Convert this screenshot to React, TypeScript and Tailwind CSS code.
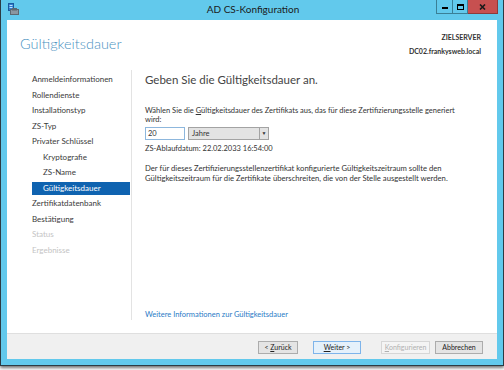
const NAV = [
  { label: 'Anmeldeinformationen' },
  { label: 'Rollendienste' },
  { label: 'Installationstyp' },
  { label: 'ZS-Typ' },
  { label: 'Privater Schlüssel' },
  { label: 'Kryptografie', sub: true },
  { label: 'ZS-Name', sub: true },
  { label: 'Gültigkeitsdauer', sub: true, active: true },
  { label: 'Zertifikatdatenbank' },
  { label: 'Bestätigung' },
  { label: 'Status', disabled: true },
  { label: 'Ergebnisse', disabled: true },
]

function AppIcon() {
  return (
    <svg width="11" height="12" viewBox="0 0 11 12">
      <rect x="0.5" y="0.5" width="5" height="7" fill="#2f7fd0" stroke="#1b5a9e" />
      <rect x="1.5" y="2" width="3" height="1" fill="#bfe0ff" />
      <rect x="1.5" y="4" width="3" height="1" fill="#bfe0ff" />
      <rect x="2.5" y="6.5" width="8" height="5" fill="#8a96a0" stroke="#5d6870" />
      <rect x="4.5" y="5.5" width="4" height="1.5" fill="none" stroke="#5d6870" />
    </svg>
  )
}

function CaptionButtons() {
  return (
    <div className="flex h-[14px]">
      <div className="w-[17px] h-full border border-t-0 border-[#3a7f96] flex items-end justify-center pb-[4px]">
        <div className="w-[6px] h-[2px] bg-black" />
      </div>
      <div className="w-[15px] h-full border border-t-0 border-l-0 border-[#3a7f96] flex items-center justify-center">
        <div className="w-[7px] h-[6px] border-[1.5px] border-t-2 border-black" />
      </div>
      <div className="w-[30px] h-full bg-[#c75050] border border-t-0 border-l-0 border-[#8e3a3a] flex items-center justify-center">
        <svg width="7" height="6" viewBox="0 0 7 6">
          <path d="M1 0.5 L6 5.5 M6 0.5 L1 5.5" stroke="#1a1a1a" strokeWidth="1.6" />
        </svg>
      </div>
    </div>
  )
}

function Btn({ children, focus, disabled }: { children: React.ReactNode; focus?: boolean; disabled?: boolean }) {
  return (
    <div
      className={
        'h-[13px] flex items-center justify-center text-[7px] leading-none border ' +
        (focus
          ? 'border-[#7eb4ea] bg-[#e5f1fb] text-[#222]'
          : disabled
            ? 'border-[#d6d6d6] bg-[#f4f4f4] text-[#b0b0b0]'
            : 'border-[#acacac] bg-[#e4e4e4] text-[#222]')
      }
    >
      <span className="whitespace-pre">{children}</span>
    </div>
  )
}

export default function App() {
  return (
    <div className="w-[504px] h-[370px] bg-white overflow-hidden font-['Segoe_UI','Lato',sans-serif] text-[#333]">
      <div className="w-[504px] h-[366px] bg-[#62c9ec] border border-t-0 border-[#2c3b43] flex flex-col shadow-[0_2px_3px_rgba(0,0,0,0.55)]">
        {/* title bar */}
        <div className="h-[20px] grid grid-cols-[1fr_auto_1fr] pl-[7px] pr-[5px]">
          <div className="pt-[3px]">
            <AppIcon />
          </div>
          <div className="text-[10px] leading-[20px] text-[#1b1b1b] -mt-[1px]">AD CS-Konfiguration</div>
          <div className="flex justify-end">
            <CaptionButtons />
          </div>
        </div>

        {/* client */}
        <div className="mx-[6px] mb-[6px] flex-1 bg-white flex flex-col">
          <div className="h-[50px] flex justify-between pl-[13px] pr-[16px]">
            <div className="pt-[14px] text-[14.5px] leading-[20px] font-light text-[#4a92bf]">Gültigkeitsdauer</div>
            <div className="pt-[10px] text-right text-[7px] font-bold text-[#333] leading-[14px]">
              <div>ZIELSERVER</div>
              <div>DC02.frankysweb.local</div>
            </div>
          </div>

          <div className="h-[250px] flex">
            <div className="w-[125px] border-r border-[#e3e3e3] pl-[25px] pr-[1px] pt-[2px] text-[8px]">
              {NAV.map((n) => (
                <div key={n.label} className="h-[15.5px] flex items-center">
                  <div
                    className={
                      'w-full h-[13px] leading-[13px] whitespace-nowrap ' +
                      (n.sub ? 'pl-[11px] ' : '') +
                      (n.active ? 'bg-[#0f63b0] text-white' : n.disabled ? 'text-[#c4c4c4]' : 'text-[#3a3a3a]')
                    }
                  >
                    {n.label}
                  </div>
                </div>
              ))}
            </div>

            <div className="flex-1 pl-[13px] flex flex-col text-[7.5px] text-[#333]">
              <div className="mt-[3px] text-[11.5px] leading-[14px] text-[#444]">Geben Sie die Gültigkeitsdauer an.</div>
              <div className="mt-[19px] leading-[9px] whitespace-nowrap">
                Wählen Sie die <span className="underline">G</span>ültigkeitsdauer des Zertifikats aus, das für diese
                Zertifizierungsstelle generiert
                <br />
                wird:
              </div>
              <div className="mt-[3px] flex gap-[3px]">
                <div className="w-[40px] h-[13px] border border-[#8db7dd] bg-white pl-[2px] leading-[11px]">20</div>
                <div className="w-[81px] h-[13px] border border-[#a3a3a3] bg-[#e3e3e3] flex">
                  <div className="flex-1 pl-[3px] leading-[11px]">Jahre</div>
                  <div className="w-[9px] border-l border-[#a3a3a3] flex items-center justify-center text-[5px] text-[#333]">
                    ▼
                  </div>
                </div>
              </div>
              <div className="mt-[4px] leading-[10px]">ZS-Ablaufdatum: 22.02.2033 16:54:00</div>
              <div className="mt-[9px] leading-[10px] whitespace-nowrap text-[7.7px]">
                Der für dieses Zertifizierungsstellenzertifikat konfigurierte Gültigkeitszeitraum sollte den
                <br />
                Gültigkeitszeitraum für die Zertifikate überschreiten, die von der Stelle ausgestellt werden.
              </div>
              <div className="mt-auto leading-[10px] text-[#2a7bc6]">Weitere Informationen zur Gültigkeitsdauer</div>
            </div>
          </div>

          <div className="h-[13px]" />

          <div className="flex-1 bg-[#f0f0f0] border-t border-[#dfdfdf] flex justify-end items-start pt-[7px] pr-[14px]">
            <div className="w-[40px]">
              <Btn>
                {'< '}
                <span className="underline">Z</span>urück
              </Btn>
            </div>
            <div className="w-[48px] ml-[15px]">
              <Btn focus>
                <span className="underline">W</span>
                {'eiter >'}
              </Btn>
            </div>
            <div className="w-[49px] ml-[20px]">
              <Btn disabled>
                <span className="underline">K</span>onfigurieren
              </Btn>
            </div>
            <div className="w-[48px] ml-[5px]">
              <Btn>Abbrechen</Btn>
            </div>
          </div>
        </div>
      </div>
    </div>
  )
}
